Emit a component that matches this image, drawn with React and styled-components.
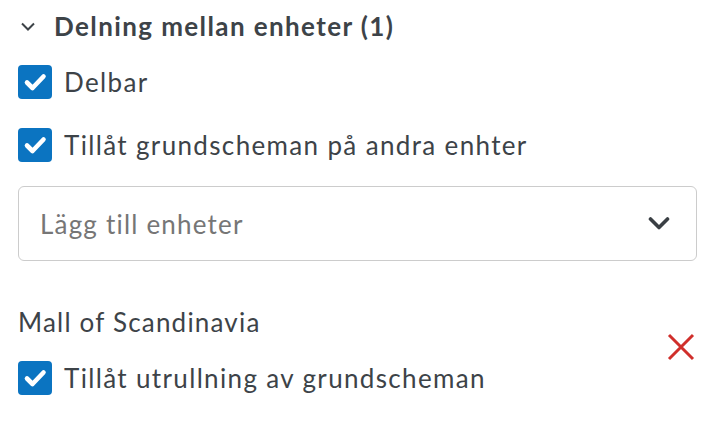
import styled, { createGlobalStyle } from 'styled-components';

const Global = createGlobalStyle`
  body {
    margin: 0;
    background: #ffffff;
    font-family: Lato, "Liberation Sans", sans-serif;
    color: #3d4348;
  }
`;

const Panel = styled.div`
  padding: 0 23px 0 18px;
  width: 720px;
  box-sizing: border-box;
`;

const Header = styled.div`
  display: flex;
  align-items: center;
  height: 52px;
  gap: 19px;
  padding-left: 3px;
`;

const Title = styled.h2`
  margin: 0;
  font-size: 26px;
  letter-spacing: 1.4px;
  font-weight: 700;
  color: #3d4348;
`;

const Row = styled.label`
  display: flex;
  align-items: center;
  gap: 12px;
  height: 34px;
  margin-top: ${p => p.$top || 0}px;
  font-size: 26px;
  letter-spacing: 1.35px;
  color: #3d4348;
`;

const Box = styled.span`
  width: 34px;
  height: 34px;
  border-radius: 4px;
  background: #0b74c1;
  display: flex;
  flex-shrink: 0;
`;

const Select = styled.div`
  margin-top: 24px;
  height: 75px;
  border: 1.5px solid #cccccc;
  border-radius: 6px;
  box-sizing: border-box;
  display: flex;
  align-items: center;
  justify-content: space-between;
  padding: 0 26px 0 21px;
`;

const Placeholder = styled.span`
  font-size: 26px;
  letter-spacing: 1.2px;
  color: #767676;
`;

const Unit = styled.div`
  margin-top: 46px;
  display: flex;
  align-items: center;
  justify-content: space-between;
`;

const UnitName = styled.div`
  font-size: 26px;
  letter-spacing: 1.2px;
  color: #3d4348;
  line-height: 30px;
`;

const RemoveButton = styled.button`
  border: 0;
  background: none;
  padding: 0;
  margin-right: 2px;
  margin-bottom: 8px;
  display: flex;
`;

const Check = () => (
  <svg width="34" height="34" viewBox="0 0 34 34">
    <path d="M9 17.5 L14.5 23 L25.5 11.5" fill="none" stroke="#fff" strokeWidth="4.6" strokeLinecap="round" strokeLinejoin="round" />
  </svg>
);

function Checkbox({ label, top }) {
  return (
    <Row $top={top}>
      <Box><Check /></Box>
      <span>{label}</span>
    </Row>
  );
}

export default function App() {
  return (
    <Panel>
      <Global />
      <Header>
        <svg width="14" height="9" viewBox="0 0 14 9">
          <path d="M1 1.5 L7 7.5 L13 1.5" fill="none" stroke="#3d4348" strokeWidth="2" />
        </svg>
        <Title>Delning mellan enheter (1)</Title>
      </Header>
      <Checkbox label="Delbar" top={13} />
      <Checkbox label="Tillåt grundscheman på andra enhter" top={29} />
      <Select>
        <Placeholder>Lägg till enheter</Placeholder>
        <svg width="22" height="15" viewBox="0 0 22 15">
          <path d="M2.5 3 L11 11.5 L19.5 3" fill="none" stroke="#3a3f44" strokeWidth="3.6" strokeLinecap="round" strokeLinejoin="round" />
        </svg>
      </Select>
      <Unit>
        <div>
          <UnitName>Mall of Scandinavia</UnitName>
          <Checkbox label="Tillåt utrullning av grundscheman" top={24} />
        </div>
        <RemoveButton aria-label="Ta bort">
          <svg width="28" height="28" viewBox="0 0 28 28">
            <path d="M2 2 L26 26 M26 2 L2 26" stroke="#d02f2b" strokeWidth="3" />
          </svg>
        </RemoveButton>
      </Unit>
    </Panel>
  );
}
